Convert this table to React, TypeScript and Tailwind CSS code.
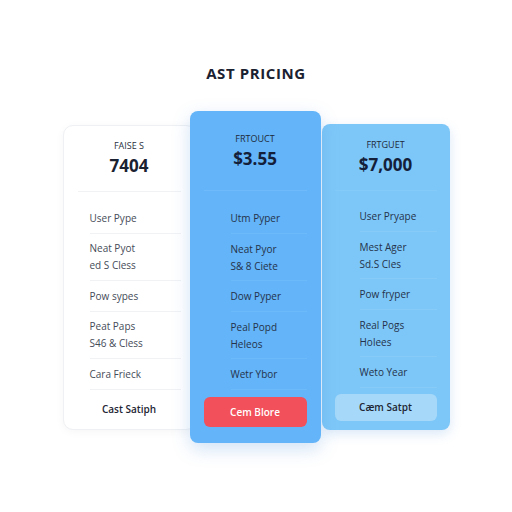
const font = { fontFamily: '"Open Sans", "Liberation Sans", sans-serif' }

type Plan = {
  label: string
  price: string
  rows: string[][]
  cta: string
}

const plans: Plan[] = [
  {
    label: "FAISE S",
    price: "7404",
    rows: [["User Pype"], ["Neat Pyot", "ed S Cless"], ["Pow sypes"], ["Peat Paps", "S46 & Cless"], ["Cara Frieck"]],
    cta: "Cast Satiph",
  },
  {
    label: "FRTOUCT",
    price: "$3.55",
    rows: [["Utm Pyper"], ["Neat Pyor", "S& 8 Ciete"], ["Dow Pyper"], ["Peal Popd", "Heleos"], ["Wetr Ybor"]],
    cta: "Cem Blore",
  },
  {
    label: "FRTGUET",
    price: "$7,000",
    rows: [["User Pryape"], ["Mest Ager", "Sd.S Cles"], ["Pow fryper"], ["Real Pogs", "Holees"], ["Weto Year"]],
    cta: "Cæm Satpt",
  },
]

function Rows({ rows, line }: { rows: string[][]; line: string }) {
  return (
    <div className="flex flex-col">
      {rows.map((r, i) => (
        <div
          key={i}
          className={`flex flex-col justify-center gap-[5px] border-b ${line} ${r.length > 1 ? "h-[47px]" : "h-[31px]"}`}
        >
          {r.map((t) => (
            <span key={t} className="text-[10px] leading-[12px]">
              {t}
            </span>
          ))}
        </div>
      ))}
    </div>
  )
}

export default function App() {
  const [left, mid, right] = plans
  return (
    <div className="w-[512px] h-[512px] bg-white flex flex-col items-center text-[#1e2533]" style={font}>
      <h1 className="mt-[64px] text-[15px] leading-[18px] font-bold tracking-[0.04em] text-[#1a2130]">AST PRICING</h1>

      <div className="mt-[29px] flex items-center">
        {/* left card */}
        <div className="w-[133px] h-[305px] -mr-[6px] bg-white border border-[#eef0f3] rounded-[10px] shadow-[0_2px_10px_rgba(0,0,0,0.04)] flex flex-col px-[14px]">
          <div className="h-[66px] flex flex-col items-center justify-center border-b border-[#f1f2f4]">
            <span className="text-[9px] leading-[11px] text-[#2b3140]">{left.label}</span>
            <span className="mt-[5px] text-[17px] leading-[20px] font-bold text-[#1a2130]">{left.price}</span>
          </div>
          <div className="pl-[12px] mt-[11px] text-[#454b58]">
            <Rows rows={left.rows} line="border-[#f1f2f4]" />
          </div>
          <div className="mt-[5px] h-[30px] flex items-center justify-center text-[10px] font-semibold text-[#1e2533]">
            {left.cta}
          </div>
        </div>

        {/* middle card */}
        <div className="relative z-10 w-[131px] h-[332px] bg-[#63b4f8] rounded-[8px] shadow-[0_6px_18px_rgba(70,140,220,0.25)] flex flex-col px-[14px]">
          <div className="h-[80px] flex flex-col items-center justify-center border-b border-[#6fbafa]">
            <span className="text-[9px] leading-[11px] text-[#1f2a3a]">{mid.label}</span>
            <span className="mt-[5px] text-[17px] leading-[20px] font-bold text-[#14203a]">{mid.price}</span>
          </div>
          <div className="pl-[27px] mt-[12px] text-[#25324a]">
            <Rows rows={mid.rows} line="border-[#6dbafa]" />
          </div>
          <div className="mt-[7px] h-[30px] rounded-[6px] bg-[#f2505a] flex items-center justify-center text-[10px] font-semibold text-white">
            {mid.cta}
          </div>
        </div>

        {/* right card */}
        <div className="w-[128px] h-[306px] ml-[1px] bg-[#7dc7f8] rounded-[8px] shadow-[0_4px_12px_rgba(70,140,220,0.2)] flex flex-col px-[13px]">
          <div className="h-[67px] flex flex-col items-center justify-center border-b border-[#85cbf9]">
            <span className="text-[9px] leading-[11px] text-[#1f2a3a]">{right.label}</span>
            <span className="mt-[5px] text-[17px] leading-[20px] font-bold text-[#14203a]">{right.price}</span>
          </div>
          <div className="pl-[25px] mt-[10px] text-[#25324a]">
            <Rows rows={right.rows} line="border-[#87ccf9]" />
          </div>
          <div className="mt-[6px] h-[27px] rounded-[6px] bg-[#a6d9f9] flex items-center justify-center text-[10px] font-semibold text-[#1e2533]">
            {right.cta}
          </div>
        </div>
      </div>
    </div>
  )
}
